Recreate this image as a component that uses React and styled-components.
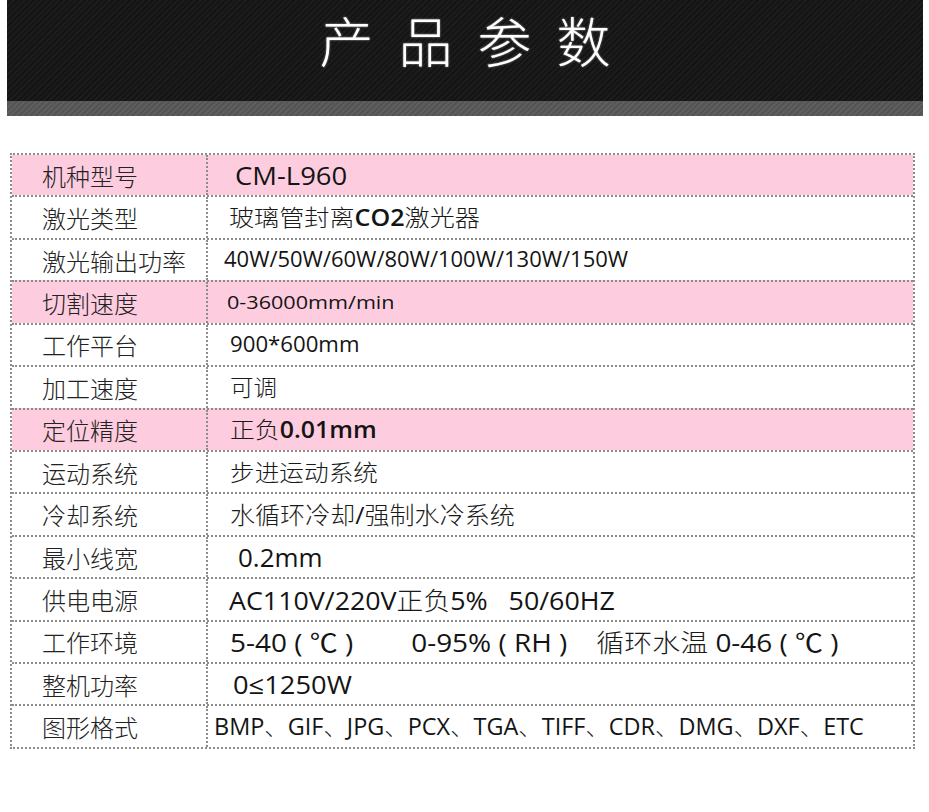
import React, { useLayoutEffect, useRef, useState } from 'react';
import styled, { createGlobalStyle } from 'styled-components';

const GlobalStyle = createGlobalStyle`
  html, body { margin: 0; padding: 0; background: #fff; }
  body { font-family: "Noto Sans CJK SC", sans-serif; }
`;

const Page = styled.div`
  width: 929px;
  height: 812px;
  overflow: hidden;
  background: #fff;
`;

// --- cabeçalho escuro ---
const Banner = styled.header`
  margin: 0 6px 0 7px;
  display: flex;
  flex-direction: column;
`;

const BannerDark = styled.div`
  height: 101px;
  display: flex;
  justify-content: center;
  align-items: flex-start;
  padding-top: 2px;
  box-sizing: border-box;
  background: repeating-linear-gradient(135deg, #1c1c1c 0 2px, #141414 2px 4px);
`;

const BannerStrip = styled.div`
  height: 15px;
  background: repeating-linear-gradient(135deg, #5e5e5e 0 2px, #545454 2px 4px);
`;

const Title = styled.h1`
  margin: 0;
  padding: 0 10px;
  font-family: "Noto Sans CJK SC", sans-serif;
  font-weight: 300;
  font-size: 54px;
  line-height: 1.4;
  word-spacing: 13px;
  color: #fff;
  text-shadow: 0 0 2px rgba(255, 255, 255, 0.7);
`;

// --- tabela ---
const line = '2px dotted #8c8c8c';

const Table = styled.section`
  margin: 37px 0 0 10px;
  width: 905px;
  height: 596px;
  box-sizing: border-box;
  border: ${line};
  display: flex;
  flex-direction: column;
`;

const Row = styled.div`
  flex: 1;
  display: grid;
  grid-template-columns: 196px 1fr;
  background: ${p => (p.$pink ? '#fdcddf' : '#fff')};
  & + & { border-top: ${line}; }
`;

const Label = styled.div`
  box-sizing: border-box;
  border-right: ${line};
  display: flex;
  align-items: center;
  padding-left: 30px;
  font-family: "Noto Sans CJK SC", sans-serif;
  font-weight: 300;
  font-size: 24px;
  color: #222;
`;

const Value = styled.div`
  display: flex;
  align-items: center;
  padding-left: ${p => p.$indent}px;
  overflow: hidden;
`;

const ValueText = styled.span`
  display: inline-block;
  white-space: pre;
  transform-origin: left center;
  font-family: "Open Sans", "Noto Sans CJK SC", sans-serif;
  font-size: ${p => p.$size}px;
  line-height: 1.3;
  color: #141414;
`;

const Han = styled.span`
  font-family: "Noto Sans CJK SC", sans-serif;
  font-weight: 300;
  color: #1a1a1a;
`;

const Strong = styled.b`
  font-weight: 600;
`;

// "**x**" vira negrito, trechos em chinês ficam com o peso leve
const renderText = str =>
  str.split(/\*\*(.+?)\*\*/).map((part, i) => {
    if (i % 2 === 1) return <Strong key={i}>{part}</Strong>;
    return part.split(/([\u3000-\u9fff]+)/).map((seg, j) =>
      j % 2 === 1 ? <Han key={`${i}-${j}`}>{seg}</Han> : seg
    );
  });

// ajusta a largura do texto à largura medida na imagem
const FitText = ({ target, size, text }) => {
  const ref = useRef(null);
  const [sx, setSx] = useState(1);
  useLayoutEffect(() => {
    const w = ref.current ? ref.current.offsetWidth : 0;
    if (w && target) setSx(target / w);
  }, [target]);
  return (
    <ValueText ref={ref} $size={size} style={{ transform: `scaleX(${sx})` }}>
      {renderText(text)}
    </ValueText>
  );
};

const rows = [
  { label: '机种型号', pink: true, x: 235, w: 112, size: 25, value: 'CM-L960' },
  { label: '激光类型', x: 229, w: 251, size: 23, value: '玻璃管封离**CO2**激光器' },
  { label: '激光输出功率', x: 224, w: 404, size: 21, value: '40W/50W/60W/80W/100W/130W/150W' },
  { label: '切割速度', pink: true, x: 227, w: 167, size: 19, value: '0-36000mm/min' },
  { label: '工作平台', x: 230, w: 130, size: 21, value: '900*600mm' },
  { label: '加工速度', x: 230, w: 47, size: 23, value: '可调' },
  { label: '定位精度', pink: true, x: 230, w: 147, size: 23, value: '正负**0.01mm**' },
  { label: '运动系统', x: 230, w: 148, size: 23, value: '步进运动系统' },
  { label: '冷却系统', x: 230, w: 285, size: 24, value: '水循环冷却/强制水冷系统' },
  { label: '最小线宽', x: 238, w: 84, size: 25, value: '0.2mm' },
  { label: '供电电源', x: 229, w: 386, size: 25, value: 'AC110V/220V正负5%   50/60HZ' },
  { label: '工作环境', x: 230, w: 608, size: 25, value: '5-40 ( ℃ )        0-95% ( RH )    循环水温 0-46 ( ℃ )' },
  { label: '整机功率', x: 233, w: 119, size: 25, value: '0≤1250W' },
  { label: '图形格式', x: 214, w: 650, size: 23, value: 'BMP、GIF、JPG、PCX、TGA、TIFF、CDR、DMG、DXF、ETC' },
];

const App = () => (
  <Page>
    <GlobalStyle />
    <Banner>
      <BannerDark>
        <Title>产 品 参 数</Title>
      </BannerDark>
      <BannerStrip />
    </Banner>
    <Table>
      {rows.map(r => (
        <Row key={r.label} $pink={r.pink}>
          <Label>{r.label}</Label>
          <Value $indent={r.x - 208}>
            <FitText target={r.w} size={r.size} text={r.value} />
          </Value>
        </Row>
      ))}
    </Table>
  </Page>
);

export default App;
